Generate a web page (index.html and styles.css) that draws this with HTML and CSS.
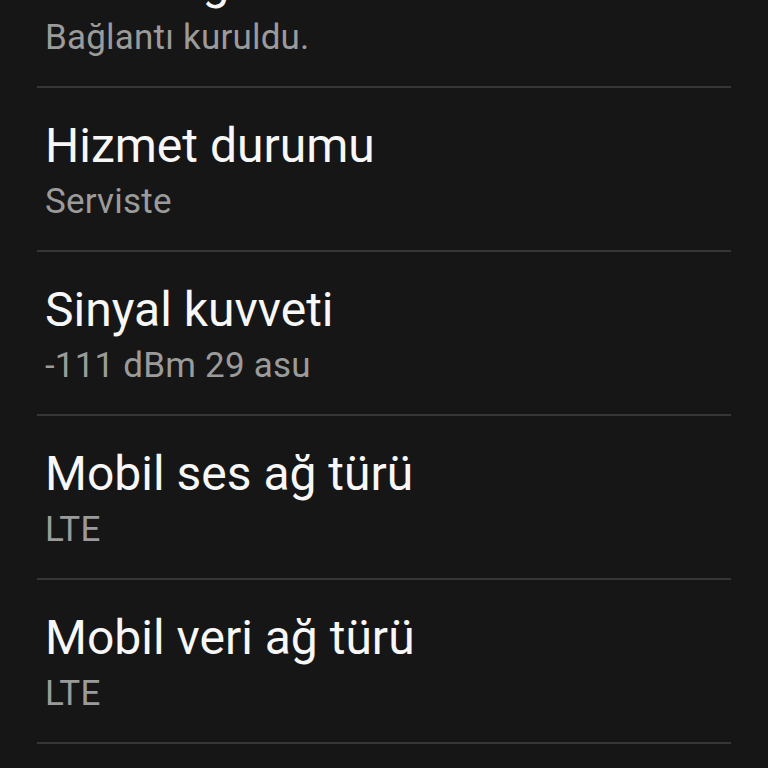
FILE: index.html
```html
<!DOCTYPE html>
<html lang="tr">
<head>
<meta charset="utf-8">
<title>Durum</title>
<link rel="stylesheet" href="styles.css">
</head>
<body>
<ul class="list">
  <li class="item">
    <div class="title">Mobil ağ durumu</div>
    <div class="sub">Bağlantı kuruldu.</div>
  </li>
  <li class="item">
    <div class="title">Hizmet durumu</div>
    <div class="sub">Serviste</div>
  </li>
  <li class="item">
    <div class="title">Sinyal kuvveti</div>
    <div class="sub">-111 dBm 29 asu</div>
  </li>
  <li class="item">
    <div class="title">Mobil ses ağ türü</div>
    <div class="sub">LTE</div>
  </li>
  <li class="item">
    <div class="title">Mobil veri ağ türü</div>
    <div class="sub">LTE</div>
  </li>
</ul>
</body>
</html>
```
FILE: styles.css
```css
html, body {
  margin: 0;
  padding: 0;
  background: #161616;
  height: 100%;
  overflow: hidden;
}

.list {
  list-style: none;
  margin: -76px 0 0 0;
  padding: 0 37px;
  font-family: Roboto, "Noto Sans", sans-serif;
}

.item {
  padding: 30px 0 26px 8px;
  border-bottom: 2px solid #363636;
}

.title {
  font-size: 48px;
  line-height: 56px;
  color: #f7f7f7;
  white-space: nowrap;
}

.sub {
  margin-top: 6px;
  font-size: 35px;
  line-height: 44px;
  color: #9b9b9b;
  white-space: nowrap;
  letter-spacing: 0.2px;
}
```
